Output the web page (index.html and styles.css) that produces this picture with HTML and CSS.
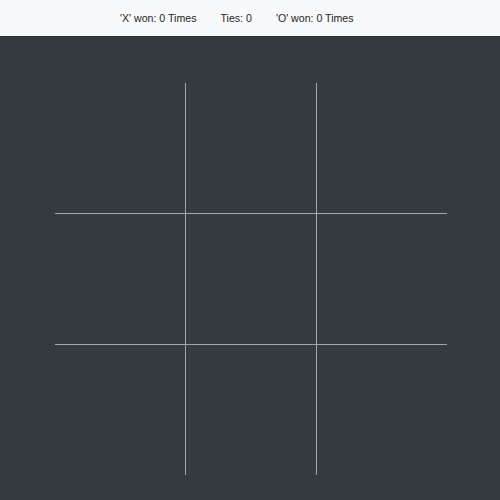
FILE: index.html
```html
<!DOCTYPE html>
<html>
<head>
<meta charset="utf-8">
<link rel="stylesheet" href="styles.css">
</head>
<body>
<header class="scores">
  <span class="score">'X' won: 0 Times</span>
  <span class="score">Ties: 0</span>
  <span class="score">'O' won: 0 Times</span>
</header>
<main class="stage">
  <div class="board">
    <div class="cell"></div><div class="cell"></div><div class="cell"></div>
    <div class="cell"></div><div class="cell"></div><div class="cell"></div>
    <div class="cell"></div><div class="cell"></div><div class="cell"></div>
  </div>
</main>
</body>
</html>
```
FILE: styles.css
```css
html, body {
  margin: 0;
  padding: 0;
  height: 100%;
  background: #343a40;
}
body {
  font-family: "Liberation Sans", Arial, sans-serif;
}
.scores {
  height: 36px;
  background: #f8f9fa;
  border-bottom: 1px solid #2a2e33;
  display: flex;
  align-items: center;
  padding-left: 120px;
  gap: 24px;
  font-size: 10.6px;
  color: #212529;
}
.stage {
  padding: 46px 0 0 55px;
}
.board {
  display: grid;
  grid-template-columns: repeat(3, 130px);
  grid-template-rows: repeat(3, 130px);
  gap: 1px;
  width: 392px;
  background: #a3a6aa;
}
.cell {
  background: #343a40;
}
```
